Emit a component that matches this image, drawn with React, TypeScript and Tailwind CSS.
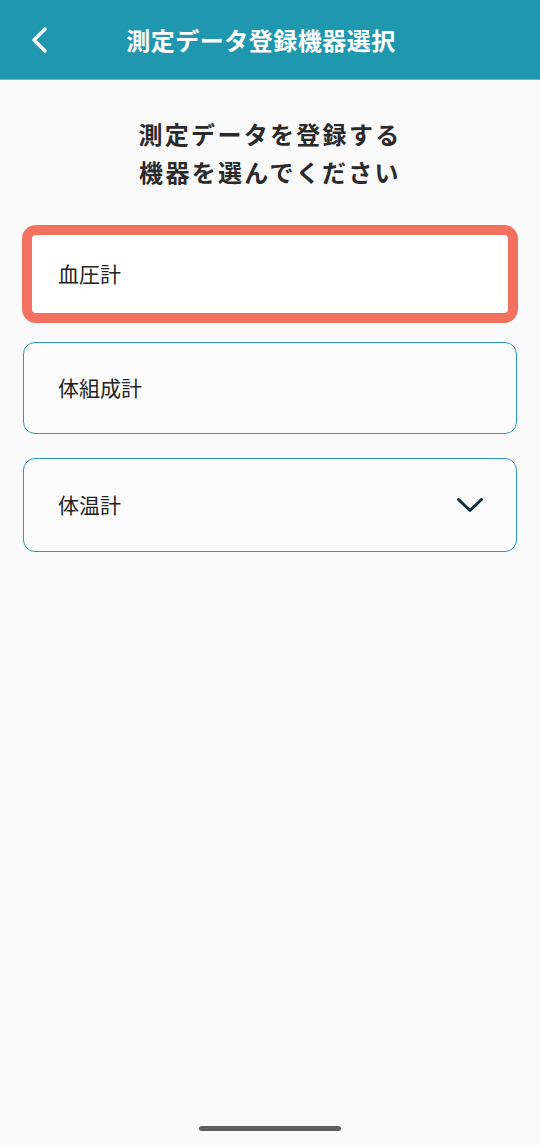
import React from "react"

const devices = [
    { name: "血圧計", selected: true },
    { name: "体組成計", selected: false, h: "h-[92px]", mt: "mt-[19px]" },
    { name: "体温計", selected: false, h: "h-[94px]", mt: "mt-[24px]", dropdown: true }
]

const App = () => (
    <div
        className="flex flex-col w-[540px] h-[1145px] bg-[#fafafa] text-[#222]"
        style={{ fontFamily: '"Noto Sans CJK JP", "Noto Sans", sans-serif' }}
    >
        <div className="flex items-center h-[80px] bg-[#1f97ae] border-b border-b-[#6fbccb] px-[28px]">
            <svg width="22" height="28" viewBox="0 0 22 28" fill="none">
                <path d="M17 3 L6 14 L17 25" stroke="#fff" strokeWidth="3.5" strokeLinecap="round" strokeLinejoin="round" />
            </svg>
            <h1 className="flex-1 text-center text-white text-[24px] font-bold tracking-[0.5px] pr-[40px]">
                測定データ登録機器選択
            </h1>
        </div>

        <div className="flex flex-col px-[22px] pt-[35px]">
            <p className="text-center text-[24px] font-bold leading-[38px] tracking-[2.3px] text-[#2a2a2a]">
                測定データを登録する
                <br />
                機器を選んでください
            </p>

            <div className="flex flex-col mt-[34px]">
                {devices.map((item, index) =>
                    item.selected ? (
                        <div
                            key={index}
                            className="flex items-center h-[98px] rounded-[14px] border-[10px] border-[#f47160] bg-white pl-[26px] text-[21px]"
                        >
                            {item.name}
                        </div>
                    ) : (
                        <div
                            key={index}
                            className={`flex items-center justify-between ${item.h} ${item.mt} mx-[1px] rounded-[12px] border-[1.5px] border-[#2a9bb3] bg-[#fbfbfb] pl-[34px] pr-[33px] text-[21px]`}
                        >
                            <span>{item.name}</span>
                            {item.dropdown && (
                                <svg width="26" height="15" viewBox="0 0 26 15" fill="none">
                                    <path d="M1.5 1.5 L13 12.5 L24.5 1.5" stroke="#13323d" strokeWidth="3" strokeLinecap="round" strokeLinejoin="round" />
                                </svg>
                            )}
                        </div>
                    )
                )}
            </div>
        </div>

        <div className="flex-1" />
        <div className="flex justify-center pb-[14px]">
            <div className="w-[142px] h-[5px] rounded-full bg-[#5f5f5f]" />
        </div>
    </div>
)

export default App
